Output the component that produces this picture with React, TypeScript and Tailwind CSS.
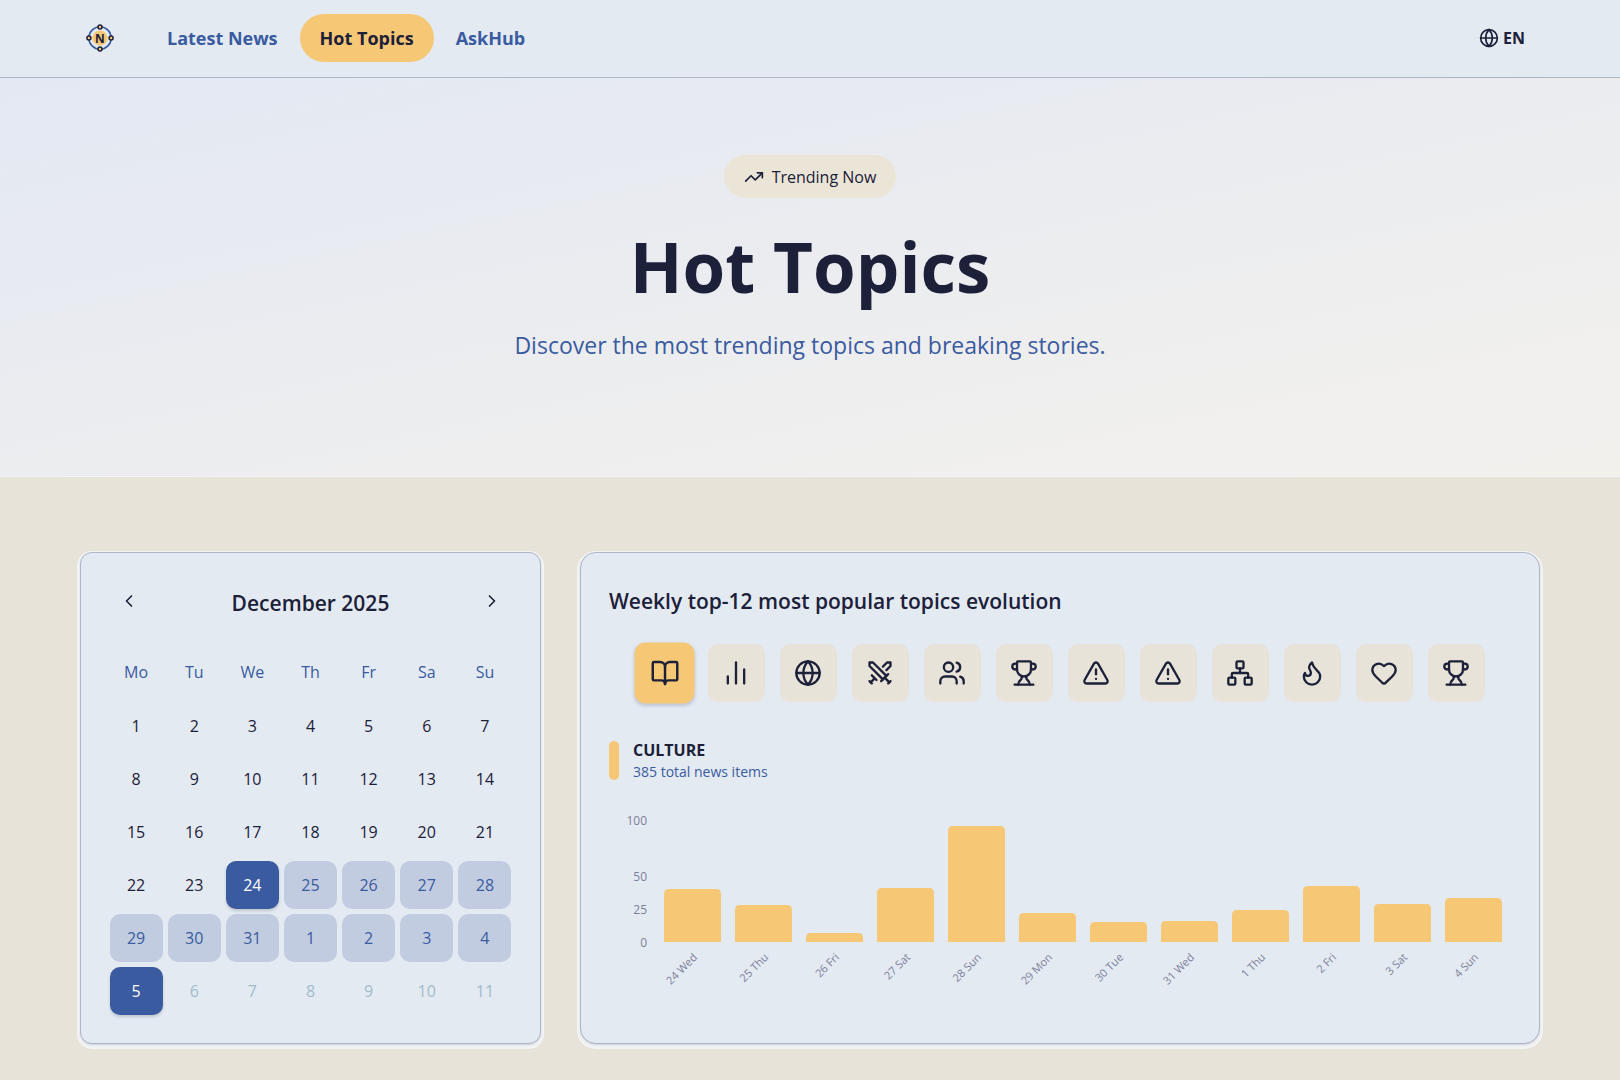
import { useState } from "react";
import {
  BookOpen,
  ChartNoAxesColumn,
  ChevronLeft,
  ChevronRight,
  Flame,
  Globe,
  Heart,
  Network,
  Swords,
  TrendingUp,
  TriangleAlert,
  Trophy,
  Users,
} from "lucide-react";

const topics = [
  { name: "Culture", Icon: BookOpen },
  { name: "Economy", Icon: ChartNoAxesColumn },
  { name: "World", Icon: Globe },
  { name: "Conflict", Icon: Swords },
  { name: "Society", Icon: Users },
  { name: "Awards", Icon: Trophy },
  { name: "Crime", Icon: TriangleAlert },
  { name: "Disasters", Icon: TriangleAlert },
  { name: "Technology", Icon: Network },
  { name: "Trending", Icon: Flame },
  { name: "Health", Icon: Heart },
  { name: "Sport", Icon: Trophy },
];

const series = [
  { label: "24 Wed", height: 53 },
  { label: "25 Thu", height: 37 },
  { label: "26 Fri", height: 9 },
  { label: "27 Sat", height: 54 },
  { label: "28 Sun", height: 116 },
  { label: "29 Mon", height: 29 },
  { label: "30 Tue", height: 20 },
  { label: "31 Wed", height: 21 },
  { label: "1 Thu", height: 32 },
  { label: "2 Fri", height: 56 },
  { label: "3 Sat", height: 38 },
  { label: "4 Sun", height: 44 },
];

const ticks = [
  { value: 100, y: 22 },
  { value: 50, y: 78 },
  { value: 25, y: 111 },
  { value: 0, y: 144 },
];

const weekdays = ["Mo", "Tu", "We", "Th", "Fr", "Sa", "Su"];
const weeks = Array.from({ length: 6 }, (_, w) =>
  Array.from({ length: 7 }, (_, d) => w * 7 + d + 1),
);
const RANGE_START = 24;
const RANGE_END = 36;

function dayClass(n: number) {
  if (n === RANGE_START || n === RANGE_END)
    return "bg-[#3a5ba0] text-white shadow-[0_2px_3px_rgba(30,34,60,0.18)]";
  if (n > RANGE_START && n < RANGE_END) return "bg-[#c2cce0] text-[#3a5ba0]";
  if (n > RANGE_END) return "text-[#9fbccb]";
  return "text-[#1c2039]";
}

function Logo() {
  return (
    <svg viewBox="0 0 28 28" className="size-7" aria-hidden="true">
      <circle cx="14" cy="14" r="11.2" fill="none" stroke="#3a5ba0" strokeWidth="1.6" />
      <circle cx="14" cy="14" r="7.6" fill="#f6c774" />
      <g fill="#f6c774" stroke="#1c2039" strokeWidth="1.5">
        <circle cx="14" cy="2.9" r="2" />
        <circle cx="14" cy="25.1" r="2" />
        <circle cx="2.9" cy="14" r="2" />
        <circle cx="25.1" cy="14" r="2" />
      </g>
      <text x="14" y="18.5" textAnchor="middle" fontSize="12" fontWeight="700" fill="#1c2039">
        N
      </text>
    </svg>
  );
}

function Header() {
  return (
    <header className="border-b border-[#aeb7c6] bg-[#e3eaf2]">
      <div className="flex items-center px-[86px] pt-[14px] pb-[15px]">
        <a href="#home" aria-label="Home">
          <Logo />
        </a>
        <nav className="ml-[33px] flex gap-0.5 text-lg font-bold text-[#3a5ba0]">
          <a href="#latest" className="flex h-12 items-center rounded-full px-5">
            Latest News
          </a>
          <a
            href="#hot"
            aria-current="page"
            className="flex h-12 items-center rounded-full bg-[#f6c774] px-5 text-[#1c2039]"
          >
            Hot Topics
          </a>
          <a href="#ask" className="flex h-12 items-center rounded-full px-5">
            AskHub
          </a>
        </nav>
        <button
          type="button"
          className="ml-auto mr-[9px] flex items-center gap-1 text-base font-bold"
        >
          <Globe size={20} />
          EN
        </button>
      </div>
    </header>
  );
}

function Hero() {
  return (
    <section className="flex h-[399px] flex-col items-center border-b border-[#f4f5f7] bg-[linear-gradient(168deg,#e3e9f3_0%,#e7eaf2_25%,#ecedef_55%,#f1f0ee_85%,#f2f0ed_100%)] pt-[77px] text-center">
      <p className="flex h-[43px] items-center gap-2 rounded-full bg-[#ebe5d8] px-5 text-base">
        <TrendingUp size={20} />
        Trending Now
      </p>
      <h1 className="mt-7 text-[69px] leading-[80px] font-bold">Hot Topics</h1>
      <p className="mt-[23px] text-[23px] leading-8 text-[#3a5ba0]">
        Discover the most trending topics and breaking stories.
      </p>
    </section>
  );
}

function Calendar() {
  return (
    <section
      aria-label="Calendar"
      className="rounded-xl border border-[#aeb7c6] bg-[#e3eaf2] px-[26px] pt-7 pb-[26px] shadow-[0_1px_2px_rgba(120,130,150,0.3),0_2px_0_3px_#f3f4f6]"
    >
      <div className="flex h-10 items-center justify-between px-[2px]">
        <button type="button" aria-label="Previous month" className="flex size-10 items-center justify-center">
          <ChevronLeft size={20} />
        </button>
        <h2 className="pt-1 text-[21px] leading-9 font-semibold">December 2025</h2>
        <button type="button" aria-label="Next month" className="flex size-10 items-center justify-center">
          <ChevronRight size={20} />
        </button>
      </div>
      <table className="mt-[23px] w-full table-fixed border-separate border-spacing-0 text-center text-base">
        <thead>
          <tr className="text-[#3a5ba0]">
            {weekdays.map((d) => (
              <th key={d} scope="col" className="h-[55px] p-0 font-normal">
                {d}
              </th>
            ))}
          </tr>
        </thead>
        <tbody>
          {weeks.map((week) => (
            <tr key={week[0]}>
              {week.map((n) => (
                <td key={n} className="h-[53px] p-0">
                  <button
                    type="button"
                    className={`mx-auto block h-12 w-[53px] rounded-[10px] ${dayClass(n)}`}
                  >
                    {n > 31 ? n - 31 : n}
                  </button>
                </td>
              ))}
            </tr>
          ))}
        </tbody>
      </table>
    </section>
  );
}

function Chart() {
  return (
    <svg viewBox="0 0 902 210" className="mt-4 block w-full" role="img" aria-label="News items per day">
      <g fontSize="12" fill="#7d809c" textAnchor="end">
        {ticks.map((t) => (
          <text key={t.value} x="38" y={t.y + 5}>
            {t.value}
          </text>
        ))}
      </g>
      {series.map((s, i) => {
        const x = 55 + i * 71;
        const top = 144 - s.height;
        return (
          <g key={s.label}>
            <path
              d={`M${x} 144V${top + 5}q0 -5 5 -5h47q5 0 5 5V144z`}
              fill="#f6c774"
            />
            <text
              x={x + 34}
              y="160"
              transform={`rotate(-45 ${x + 34} 160)`}
              textAnchor="end"
              fontSize="11"
              fill="#7d809c"
            >
              {s.label}
            </text>
          </g>
        );
      })}
    </svg>
  );
}

function Evolution() {
  const [active, setActive] = useState(0);
  return (
    <section
      aria-label="Topic evolution"
      className="rounded-2xl border border-[#aeb7c6] bg-[#e3eaf2] px-7 pt-7 shadow-[0_1px_2px_rgba(120,130,150,0.3),0_2px_0_3px_#f3f4f6]"
    >
      <h2 className="text-[21px] leading-10 font-semibold">
        Weekly top-12 most popular topics evolution
      </h2>
      <div className="mt-[23px] flex justify-center gap-[15px]">
        {topics.map(({ name, Icon }, i) => (
          <button
            key={name}
            type="button"
            aria-label={name}
            aria-pressed={i === active}
            onClick={() => setActive(i)}
            className={`flex h-[58px] w-[57px] items-center justify-center rounded-[10px] ${
              i === active
                ? "scale-105 bg-[#f6c774] shadow-[0_2px_3px_rgba(90,100,120,0.25)]"
                : "bg-[#e7e3d8]"
            }`}
          >
            <Icon size={28} />
          </button>
        ))}
      </div>
      <div className="mt-9 flex items-center gap-[14px]">
        <span className="h-[39px] w-[10px] rounded-full bg-[#f6c774]" />
        <div>
          <h3 className="text-base leading-6 font-bold uppercase">Culture</h3>
          <p className="text-sm leading-5 text-[#3a5ba0]">385 total news items</p>
        </div>
      </div>
      <Chart />
    </section>
  );
}

export default function App() {
  return (
    <div className="flex min-h-screen flex-col bg-[#e7e3d8] font-['Open_Sans',sans-serif] text-[#1c2039]">
      <Header />
      <main className="flex-1">
        <Hero />
        <div className="grid grid-cols-[461fr_960fr] gap-[39px] px-20 pt-[75px] pb-[34px]">
          <Calendar />
          <Evolution />
        </div>
      </main>
    </div>
  );
}
